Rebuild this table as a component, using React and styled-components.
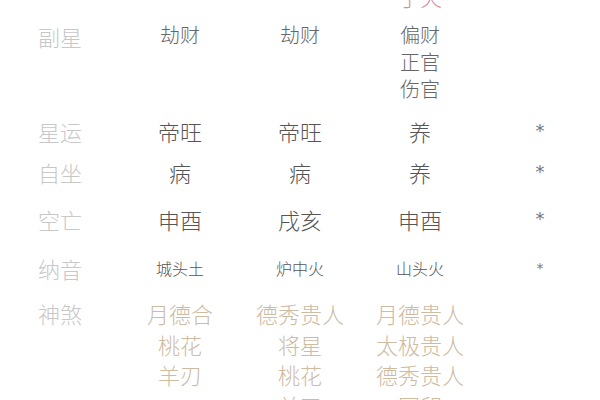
import styled, { createGlobalStyle } from 'styled-components';

const GlobalStyle = createGlobalStyle`
  html, body {
    margin: 0;
    padding: 0;
    background: #ffffff;
    overflow: hidden;
  }
  body {
    font-family: "Noto Sans CJK SC", "Noto Sans", sans-serif;
  }
`;

const Table = styled.div`
  width: 600px;
  height: 400px;
  overflow: hidden;
`;

const Inner = styled.div`
  margin-top: -19px;
`;

const Row = styled.div`
  display: grid;
  grid-template-columns: repeat(5, 120px);
  align-items: start;
  margin-top: ${p => p.$gap || 0}px;
`;

const Label = styled.div`
  text-align: center;
  font-size: 22px;
  line-height: 30px;
  color: #c8c8c8;
  font-weight: 300;
`;

const Cell = styled.div`
  display: flex;
  flex-direction: column;
  align-items: center;
  font-size: ${p => p.$size || 22}px;
  line-height: ${p => p.$lh || 30}px;
  color: ${p => p.$color || '#555555'};
  font-weight: 300;
  white-space: nowrap;
`;

const Star = styled.div`
  text-align: center;
  font-size: ${p => p.$size || 18}px;
  line-height: 30px;
  color: #777777;
  font-family: "DejaVu Sans", sans-serif;
`;

const rows = [
  { label: '副星', gap: 10, size: 20, lh: 27, color: '#666666', cells: [['劫财'], ['劫财'], ['偏财', '正官', '伤官']] },
  { label: '星运', gap: 14, cells: [['帝旺'], ['帝旺'], ['养']], star: true },
  { label: '自坐', gap: 11, cells: [['病'], ['病'], ['养']], star: true },
  { label: '空亡', gap: 17, cells: [['申酉'], ['戌亥'], ['申酉']], star: true },
  { label: '纳音', gap: 19, size: 16, cells: [['城头土'], ['炉中火'], ['山头火']], star: true, starSize: 14 },
  {
    label: '神煞', gap: 15, lh: 30.5, color: '#cdbba2',
    cells: [
      ['月德合', '桃花', '羊刃'],
      ['德秀贵人', '将星', '桃花', '羊刃'],
      ['月德贵人', '太极贵人', '德秀贵人', '国印'],
    ],
  },
];

export default function App() {
  return (
    <>
      <GlobalStyle />
      <Table>
        <Inner>
          <Row>
            <Label />
            <Cell />
            <Cell />
            <Cell $color="#d28fa0">丁火</Cell>
            <Cell />
          </Row>
          {rows.map(r => (
            <Row key={r.label} $gap={r.gap}>
              <Label>{r.label}</Label>
              {r.cells.map((lines, i) => (
                <Cell key={i} $size={r.size} $lh={r.lh} $color={r.color}>
                  {lines.map(t => <span key={t}>{t}</span>)}
                </Cell>
              ))}
              {r.star ? <Star $size={r.starSize}>*</Star> : <div />}
            </Row>
          ))}
        </Inner>
      </Table>
    </>
  );
}
